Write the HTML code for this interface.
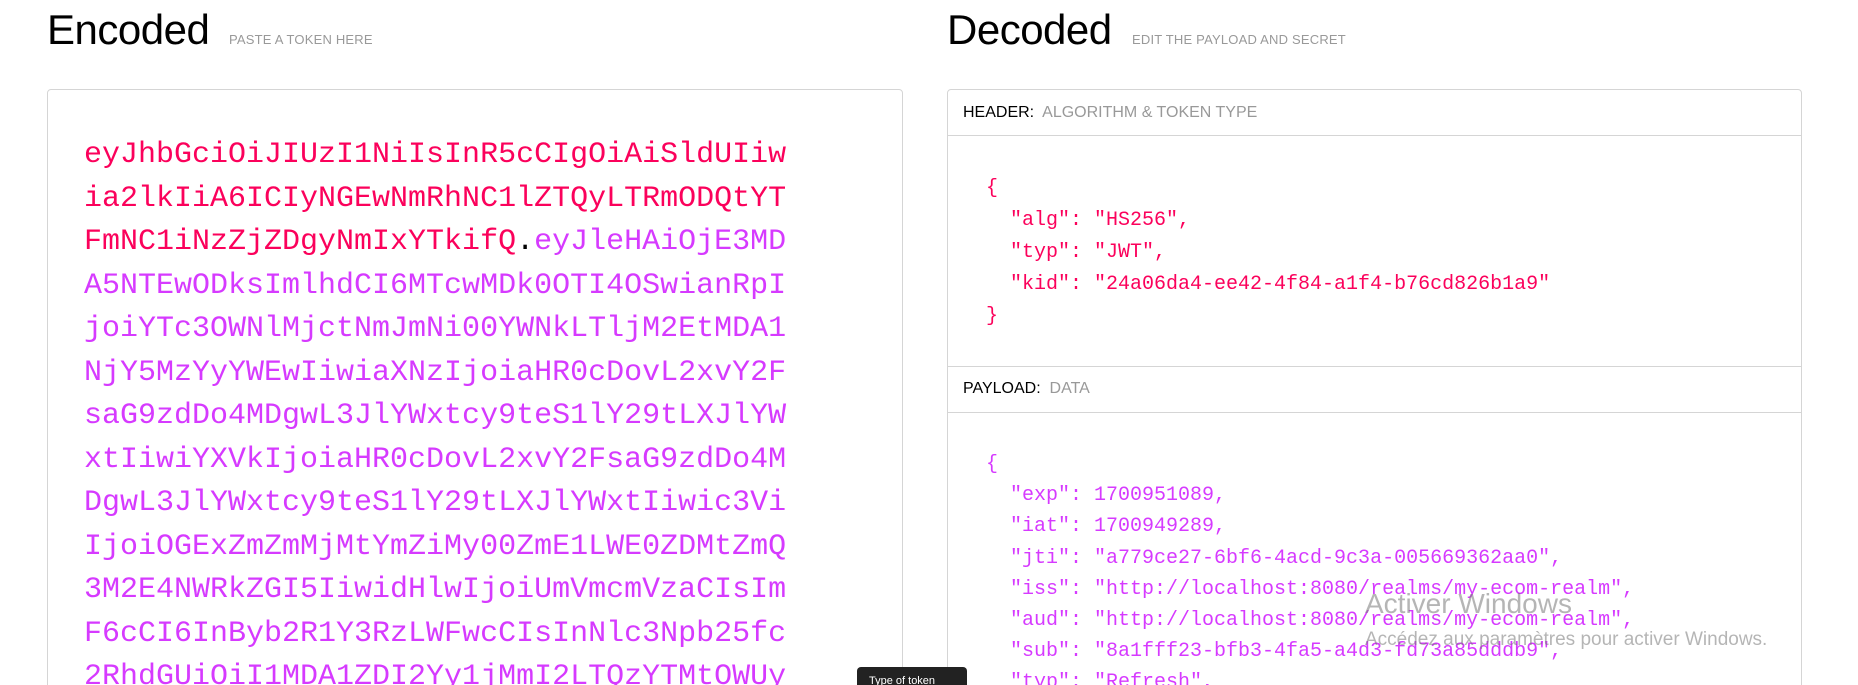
<!DOCTYPE html>
<html style="height:685px;overflow:hidden"><head><meta charset="utf-8"><style>
body{margin:0;width:1858px;height:685px;overflow:hidden;background:#fff;font-family:"Liberation Sans",sans-serif;position:relative}
.h{position:absolute;top:6px;font-size:42px;color:#000;font-weight:400;letter-spacing:-0.5px}
.sub{position:absolute;top:32px;font-size:13px;color:#999;letter-spacing:0.2px}
.card{position:absolute;top:89px;border:1px solid #d5d5d5;border-radius:4px;height:620px;box-sizing:border-box}
.tok{position:absolute;left:84px;top:134px;font-family:"Liberation Mono",monospace;font-size:30px;line-height:43.5px;white-space:pre;letter-spacing:0}
.r{color:#fb015b}.p{color:#d63aff}
.row{position:absolute;left:0;right:0;border-bottom:1px solid #d5d5d5;font-size:16px}
.row span{color:#999}
.json{position:absolute;left:986px;font-family:"Liberation Mono",monospace;font-size:20px;line-height:32px;white-space:pre}
.wm{position:absolute;color:rgba(120,120,120,0.55)}
</style></head><body>
<div class="h" style="left:47px">Encoded</div><div class="sub" style="left:229px">PASTE A TOKEN HERE</div>
<div class="h" style="left:947px">Decoded</div><div class="sub" style="left:1132px">EDIT THE PAYLOAD AND SECRET</div>
<div class="card" style="left:47px;width:856px"></div>
<div class="tok"><span class="r">eyJhbGciOiJIUzI1NiIsInR5cCIgOiAiSldUIiw
ia2lkIiA6ICIyNGEwNmRhNC1lZTQyLTRmODQtYT
FmNC1iNzZjZDgyNmIxYTkifQ</span>.<span class="p">eyJleHAiOjE3MD
A5NTEwODksImlhdCI6MTcwMDk0OTI4OSwianRpI
joiYTc3OWNlMjctNmJmNi00YWNkLTljM2EtMDA1
NjY5MzYyYWEwIiwiaXNzIjoiaHR0cDovL2xvY2F
saG9zdDo4MDgwL3JlYWxtcy9teS1lY29tLXJlYW
xtIiwiYXVkIjoiaHR0cDovL2xvY2FsaG9zdDo4M
DgwL3JlYWxtcy9teS1lY29tLXJlYWxtIiwic3Vi
IjoiOGExZmZmMjMtYmZiMy00ZmE1LWE0ZDMtZmQ
3M2E4NWRkZGI5IiwidHlwIjoiUmVmcmVzaCIsIm
F6cCI6InByb2R1Y3RzLWFwcCIsInNlc3Npb25fc
2RhdGUiOiI1MDA1ZDI2Yy1jMmI2LTQzYTMtOWUy</span></div>
<div class="card" style="left:947px;width:855px">
<div class="row" style="top:0;height:45px;line-height:45px;padding-left:15px">HEADER:&nbsp; <span>ALGORITHM &amp; TOKEN TYPE</span></div>
<div class="row" style="top:45px;height:231px"></div>
<div class="row" style="top:276px;height:46px;line-height:46px;padding-left:15px">PAYLOAD:&nbsp; <span>DATA</span></div>
</div>
<div class="json r" style="top:173px">{
  "alg": "HS256",
  "typ": "JWT",
  "kid": "24a06da4-ee42-4f84-a1f4-b76cd826b1a9"
}</div>
<div class="json p" style="top:449px;line-height:31.2px">{
  "exp": 1700951089,
  "iat": 1700949289,
  "jti": "a779ce27-6bf6-4acd-9c3a-005669362aa0",
  "iss": "http://localhost:8080/realms/my-ecom-realm",
  "aud": "http://localhost:8080/realms/my-ecom-realm",
  "sub": "8a1fff23-bfb3-4fa5-a4d3-fd73a85dddb9",
  "typ": "Refresh",</div>
<div style="position:absolute;left:857px;top:667px;width:110px;height:30px;background:#222;border-radius:4px;color:#fff;font-size:11px;padding:8px 0 0 12px;box-sizing:border-box">Type of token</div>
<div class="wm" style="left:1365px;top:588px;font-size:28px">Activer Windows</div>
<div class="wm" style="left:1365px;top:629px;font-size:19px">Accédez aux paramètres pour activer Windows.</div>
</body></html>
